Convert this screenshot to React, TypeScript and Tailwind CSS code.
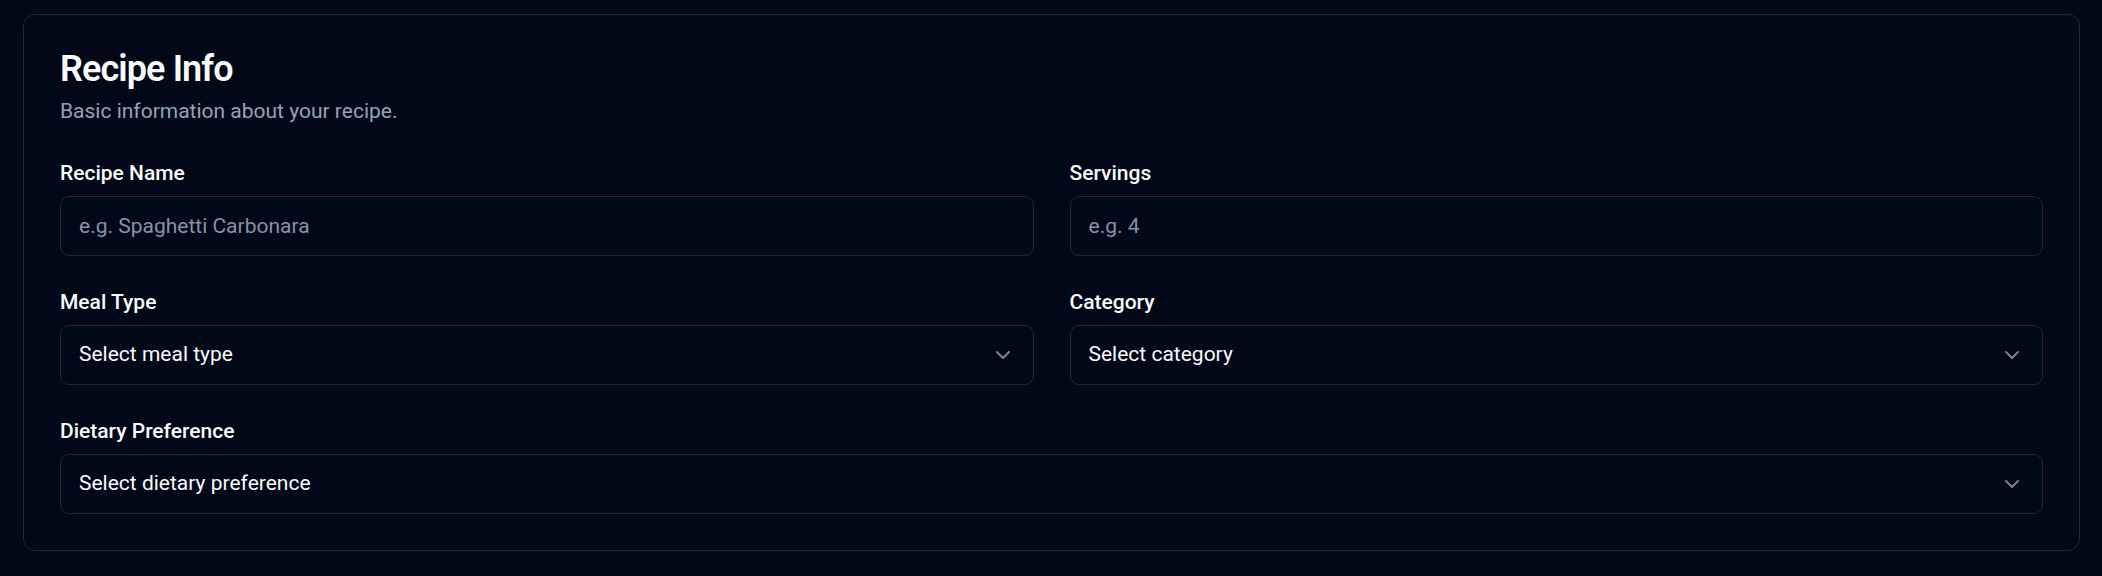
import { ChevronDown } from 'lucide-react'

// Champs de sélection — texte affiché quand rien n'est choisi
const SELECTS = {
  meal: 'Select meal type',
  category: 'Select category',
  dietary: 'Select dietary preference',
}

function Label({ children }: { children: React.ReactNode }) {
  return (
    <label className="block text-[21px] font-medium leading-none text-[#f8fafc]">
      {children}
    </label>
  )
}

function TextInput({ placeholder }: { placeholder: string }) {
  return (
    <input
      type="text"
      placeholder={placeholder}
      className="h-[60px] w-full rounded-[9px] border border-[#1e293b] bg-[#020817] px-[18px] text-[21px] text-[#f8fafc] outline-none placeholder:text-[#8593a8]"
    />
  )
}

function SelectBox({ value }: { value: string }) {
  return (
    <button
      type="button"
      className="flex h-[60px] w-full items-center justify-between rounded-[9px] border border-[#1e293b] bg-[#020817] px-[18px] text-left text-[21px] text-[#f8fafc]"
    >
      <span>{value}</span>
      <ChevronDown className="h-6 w-6 text-[#f8fafc] opacity-50" strokeWidth={2} />
    </button>
  )
}

function Field({ label, children, wide }: { label: string; children: React.ReactNode; wide?: boolean }) {
  return (
    <div className={wide ? 'col-span-2 flex flex-col gap-3' : 'flex flex-col gap-3'}>
      <Label>{label}</Label>
      {children}
    </div>
  )
}

export default function App() {
  return (
    <div
      className="min-h-[576px] bg-[#020817] pl-[23px] pr-[22px] pt-[14px]"
      style={{ fontFamily: 'Roboto, "Liberation Sans", sans-serif' }}
    >
      <div className="rounded-xl border border-[#1e293b] bg-[#020817] text-[#f8fafc]">
        <div className="flex flex-col gap-[9px] px-9 pb-[37px] pt-9">
          <h3 className="text-[36px] font-semibold leading-none tracking-tight">Recipe Info</h3>
          <p className="text-[21px] leading-[30px] text-[#94a3b8]">Basic information about your recipe.</p>
        </div>

        <div className="grid grid-cols-2 gap-9 px-9 pb-9">
          <Field label="Recipe Name">
            <TextInput placeholder="e.g. Spaghetti Carbonara" />
          </Field>
          <Field label="Servings">
            <TextInput placeholder="e.g. 4" />
          </Field>
          <Field label="Meal Type">
            <SelectBox value={SELECTS.meal} />
          </Field>
          <Field label="Category">
            <SelectBox value={SELECTS.category} />
          </Field>
          <Field label="Dietary Preference" wide>
            <SelectBox value={SELECTS.dietary} />
          </Field>
        </div>
      </div>
    </div>
  )
}
